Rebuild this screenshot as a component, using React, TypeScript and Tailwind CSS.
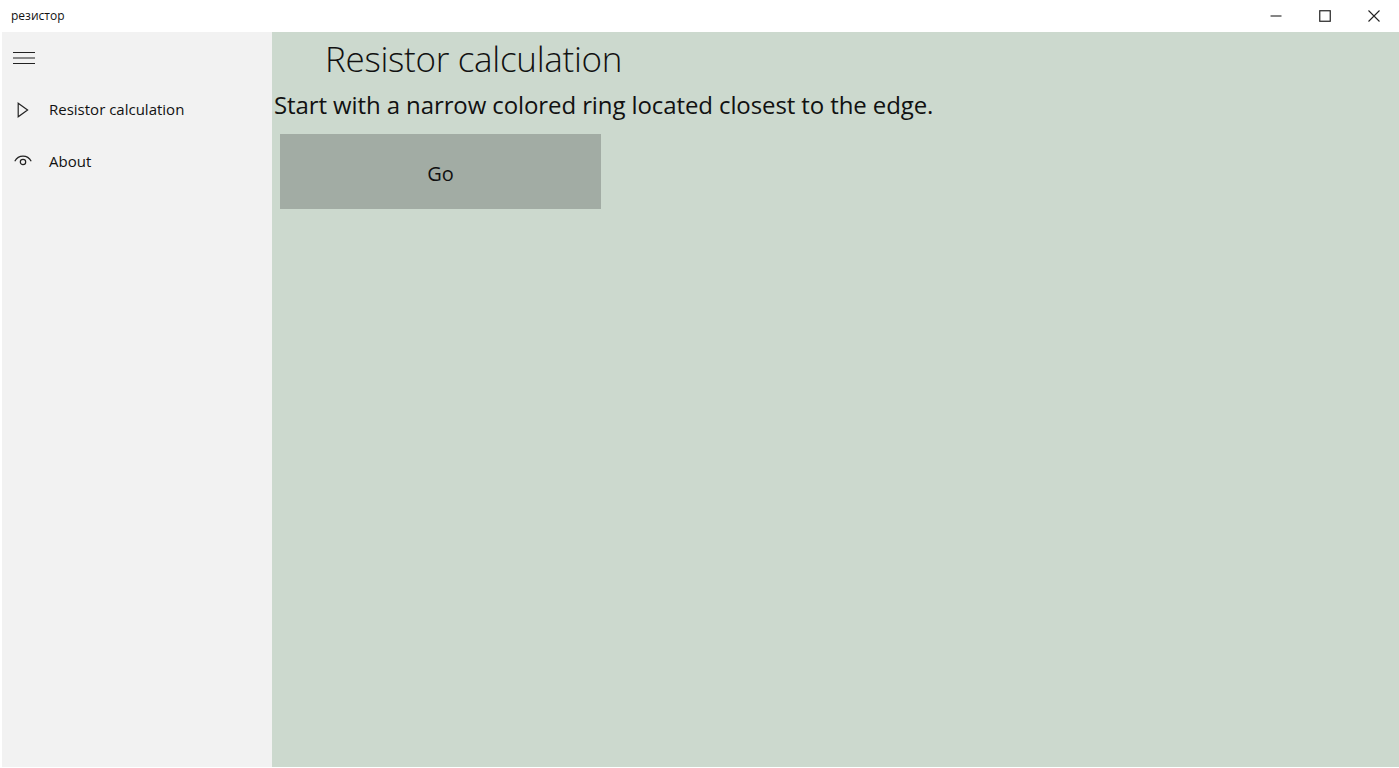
const font = "font-['Open_Sans','Noto_Sans',sans-serif]";

function NavItem({ label, icon }: { label: string; icon: React.ReactNode }) {
  return (
    <div className="h-[51px] flex items-center">
      <div className="w-[47px] flex justify-center shrink-0">{icon}</div>
      <span className="text-[15px] text-[#111]">{label}</span>
    </div>
  );
}

export default function App() {
  return (
    <div className={`h-[768px] w-[1399px] overflow-hidden bg-white flex flex-col ${font}`}>
      {/* Title bar */}
      <div className="h-8 shrink-0 flex items-center justify-between bg-white">
        <span className="pl-[11px] text-xs text-[#111]">резистор</span>
        <div className="flex items-center h-full">
          <div className="w-[49px] h-full flex items-center justify-center">
            <svg width="12" height="12" viewBox="0 0 12 12">
              <path d="M0.5 6H11.5" stroke="#222" strokeWidth="1.1" fill="none" />
            </svg>
          </div>
          <div className="w-[49px] h-full flex items-center justify-center">
            <svg width="12" height="12" viewBox="0 0 12 12">
              <rect x="0.75" y="0.75" width="10.5" height="10.5" stroke="#222" strokeWidth="1.2" fill="none" />
            </svg>
          </div>
          <div className="w-[50px] h-full flex items-center justify-center">
            <svg width="12" height="12" viewBox="0 0 12 12">
              <path d="M0.5 0.5L11.5 11.5M11.5 0.5L0.5 11.5" stroke="#222" strokeWidth="1.1" fill="none" />
            </svg>
          </div>
        </div>
      </div>

      <div className="flex-1 flex pl-0.5 pb-px min-h-0">
        {/* Sidebar */}
        <div className="w-[270px] shrink-0 bg-[#f2f2f2] flex flex-col gap-px">
          <div className="h-[51px] flex items-center pl-[11px]">
            <svg width="22" height="14" viewBox="0 0 22 14">
              <path d="M0 1.5H22M0 7H22M0 12.5H22" stroke="#222" strokeWidth="1.1" fill="none" />
            </svg>
          </div>
          <NavItem
            label="Resistor calculation"
            icon={
              <svg width="12" height="16" viewBox="0 0 12 16" className="-ml-[5px]">
                <path d="M1.2 1.2L10.6 8L1.2 14.8Z" stroke="#222" strokeWidth="1.2" fill="none" />
              </svg>
            }
          />
          <NavItem
            label="About"
            icon={
              <svg width="18" height="14" viewBox="0 0 18 14" className="-ml-1.5">
                <path d="M0.8 6.2C4.5 -0.6 13.5 -0.6 17.2 6.2" stroke="#222" strokeWidth="1.2" fill="none" />
                <circle cx="9" cy="7" r="2.7" stroke="#222" strokeWidth="1.2" fill="none" />
              </svg>
            }
          />
        </div>

        {/* Main content */}
        <div className="flex-1 bg-[#ccd9ce] flex flex-col items-start">
          <div className="pl-[53px] pt-[2px] text-[35px] leading-[50px] font-light tracking-[-0.3px] text-[#111]">
            Resistor calculation
          </div>
          <div className="pl-[2px] mt-[4px] text-[24px] leading-[34px] tracking-[-0.1px] text-[#111]">
            Start with a narrow colored ring located closest to the edge.
          </div>
          <div className="ml-2 mt-[12px] w-[321px] h-[75px] pt-1 bg-[#a2aca4] flex items-center justify-center text-xl text-[#111]">
            Go
          </div>
        </div>
      </div>
    </div>
  );
}
